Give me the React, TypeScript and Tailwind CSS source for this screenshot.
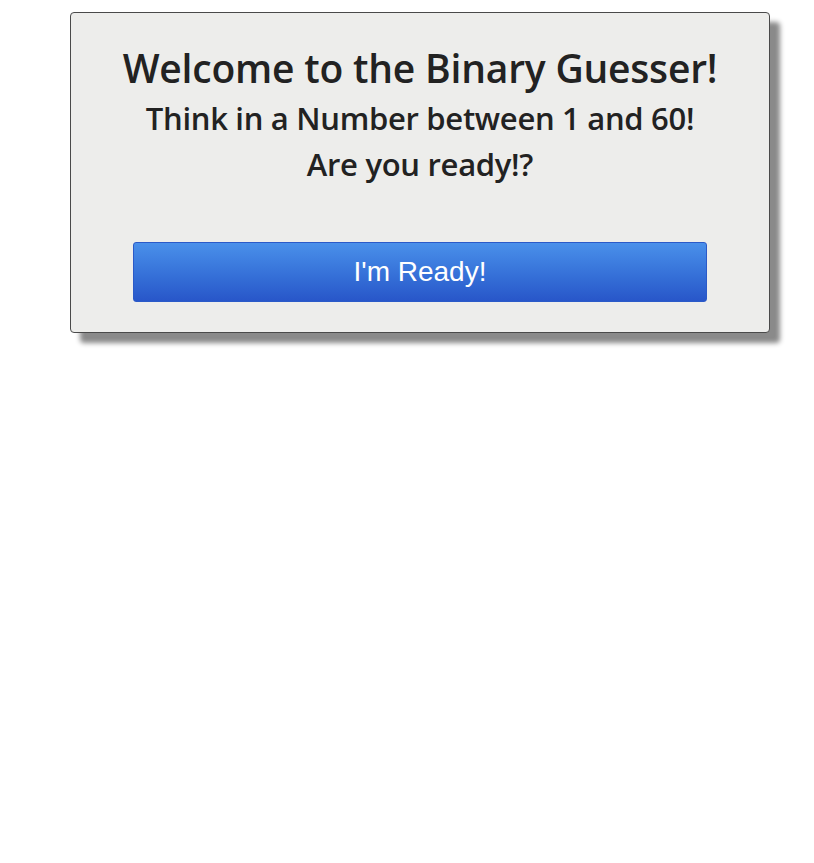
export default function App() {
  return (
    <div className="min-h-screen bg-white pt-3">
      <div
        className="ml-[70px] w-[700px] h-[321px] bg-[#ededeb] border border-[#4a4a4a] rounded-[4px] shadow-[10px_10px_5px_#8a8a8a] flex flex-col items-center text-[#222]"
        style={{ fontFamily: '"Open Sans", sans-serif' }}
      >
        <h1 className="mt-[30px] text-[39px] leading-[50px] font-semibold tracking-[-0.2px]">
          Welcome to the Binary Guesser!
        </h1>
        <h2 className="mt-[2px] text-[31px] leading-[46px] font-semibold tracking-[-0.3px]">
          Think in a Number between 1 and 60!
        </h2>
        <h2 className="text-[31px] leading-[46px] font-semibold tracking-[-0.3px]">
          Are you ready!?
        </h2>
        <button
          className="mt-[55px] w-[574px] h-[60px] rounded-[3px] border border-[#2b5ac8] bg-gradient-to-b from-[#4a90ea] to-[#2856c9] text-white text-[28px]"
          style={{ fontFamily: '"Liberation Sans", Arial, sans-serif' }}
        >
          I'm Ready!
        </button>
      </div>
    </div>
  );
}
